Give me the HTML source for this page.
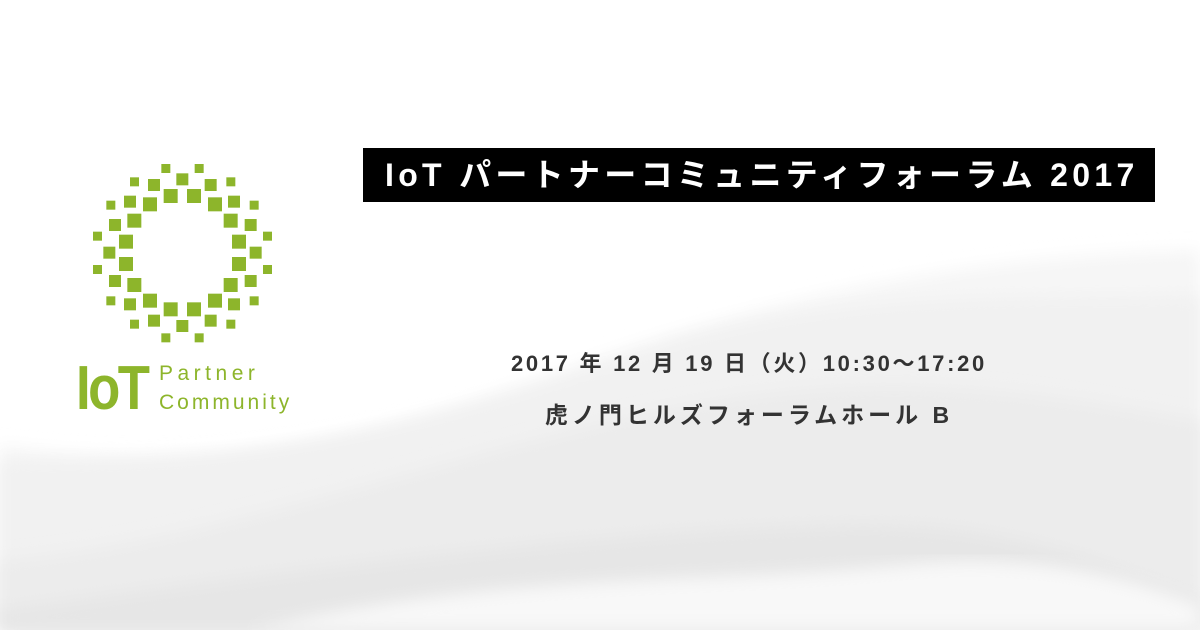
<!DOCTYPE html>
<html><head><meta charset="utf-8"><style>
html,body{margin:0;padding:0}
body{width:1200px;height:630px;position:relative;overflow:hidden;background:#fff;font-family:"Liberation Sans","Noto Sans CJK JP",sans-serif}
#bg{position:absolute;left:0;top:0}
.title{position:absolute;left:363px;top:148px;width:792px;height:54px;background:#000;color:#fff;font-weight:bold;font-size:32px;line-height:54px;padding-left:22px;box-sizing:border-box;white-space:nowrap;letter-spacing:4.3px}
.info{position:absolute;left:349px;width:800px;text-align:center;color:#333;font-weight:bold;white-space:nowrap}
.g{position:absolute;color:#8db52b;white-space:nowrap}
</style></head><body>
<svg id="bg" width="1200" height="630" viewBox="0 0 1200 630">
<defs>
<filter id="b"><feGaussianBlur stdDeviation="8"/></filter>
</defs>
<rect width="1200" height="630" fill="#fff"/>
<path d="M0 445 C250 480 420 420 620 350 C820 285 1000 255 1200 250 L1200 630 L0 630Z" fill="#f6f6f6" filter="url(#b)"/>
<path d="M0 460 C300 470 470 410 680 340 C880 285 1050 300 1200 295 L1200 630 L0 630Z" fill="#f1f1f1" filter="url(#b)"/>
<path d="M0 560 C250 540 500 430 750 395 C950 370 1100 405 1200 420 L1200 630 L0 630Z" fill="#ececec" filter="url(#b)"/>
<path d="M0 610 C300 570 600 530 850 525 C1000 522 1100 560 1200 600 L1200 630 L0 630Z" fill="#e6e6e6" filter="url(#b)"/>
<path d="M250 630 C500 570 700 585 900 565 C1050 550 1150 585 1200 605 L1200 630Z" fill="#f8f8f8" filter="url(#b)"/>
</svg>
<svg style="position:absolute;left:80px;top:150px" width="220" height="280" viewBox="0 0 660 840">
<g fill="#8db52b">
<rect x="244" y="42" width="27" height="27"/><rect x="344" y="42" width="27" height="27"/><rect x="150" y="82" width="27" height="27"/><rect x="439" y="82" width="27" height="27"/><rect x="79" y="152" width="27" height="27"/><rect x="509" y="152" width="27" height="27"/><rect x="39" y="245" width="27" height="27"/><rect x="549" y="245" width="27" height="27"/><rect x="39" y="345" width="27" height="27"/><rect x="549" y="345" width="27" height="27"/><rect x="79" y="439" width="27" height="27"/><rect x="509" y="439" width="27" height="27"/><rect x="150" y="509" width="27" height="27"/><rect x="439" y="509" width="27" height="27"/><rect x="244" y="550" width="27" height="27"/><rect x="344" y="550" width="27" height="27"/>
<rect x="289" y="70" width="36" height="36"/><rect x="204" y="87" width="36" height="36"/><rect x="374" y="87" width="36" height="36"/><rect x="132" y="137" width="36" height="36"/><rect x="444" y="137" width="36" height="36"/><rect x="87" y="207" width="36" height="36"/><rect x="494" y="207" width="36" height="36"/><rect x="70" y="290" width="36" height="36"/><rect x="509" y="290" width="36" height="36"/><rect x="87" y="375" width="36" height="36"/><rect x="494" y="375" width="36" height="36"/><rect x="132" y="445" width="36" height="36"/><rect x="444" y="445" width="36" height="36"/><rect x="204" y="494" width="36" height="36"/><rect x="374" y="494" width="36" height="36"/><rect x="289" y="510" width="36" height="36"/>
<rect x="251" y="117" width="42" height="42"/><rect x="321" y="117" width="42" height="42"/><rect x="189" y="142" width="42" height="42"/><rect x="384" y="142" width="42" height="42"/><rect x="142" y="191" width="42" height="42"/><rect x="431" y="191" width="42" height="42"/><rect x="117" y="254" width="42" height="42"/><rect x="456" y="254" width="42" height="42"/><rect x="117" y="321" width="42" height="42"/><rect x="456" y="321" width="42" height="42"/><rect x="142" y="384" width="42" height="42"/><rect x="431" y="384" width="42" height="42"/><rect x="189" y="431" width="42" height="42"/><rect x="384" y="431" width="42" height="42"/><rect x="251" y="457" width="42" height="42"/><rect x="321" y="457" width="42" height="42"/>
</g>
</svg>
<div class="g" style="left:76px;top:354px;font-size:62px;font-weight:bold;line-height:70px;letter-spacing:-3px;transform:scaleX(0.85);transform-origin:left top">IoT</div>
<div class="g" style="left:159px;top:362px;font-size:21px;line-height:24px;letter-spacing:4.5px">Partner</div>
<div class="g" style="left:159px;top:391px;font-size:21px;line-height:24px;letter-spacing:3px">Community</div>
<div class="title">IoT パートナーコミュニティフォーラム 2017</div>
<div class="info" style="top:346px;font-size:22px;letter-spacing:2.7px">2017 年 12 月 19 日（火）10:30〜17:20</div>
<div class="info" style="top:396px;font-size:23px;letter-spacing:4px">虎ノ門ヒルズフォーラムホール B</div>
</body></html>
